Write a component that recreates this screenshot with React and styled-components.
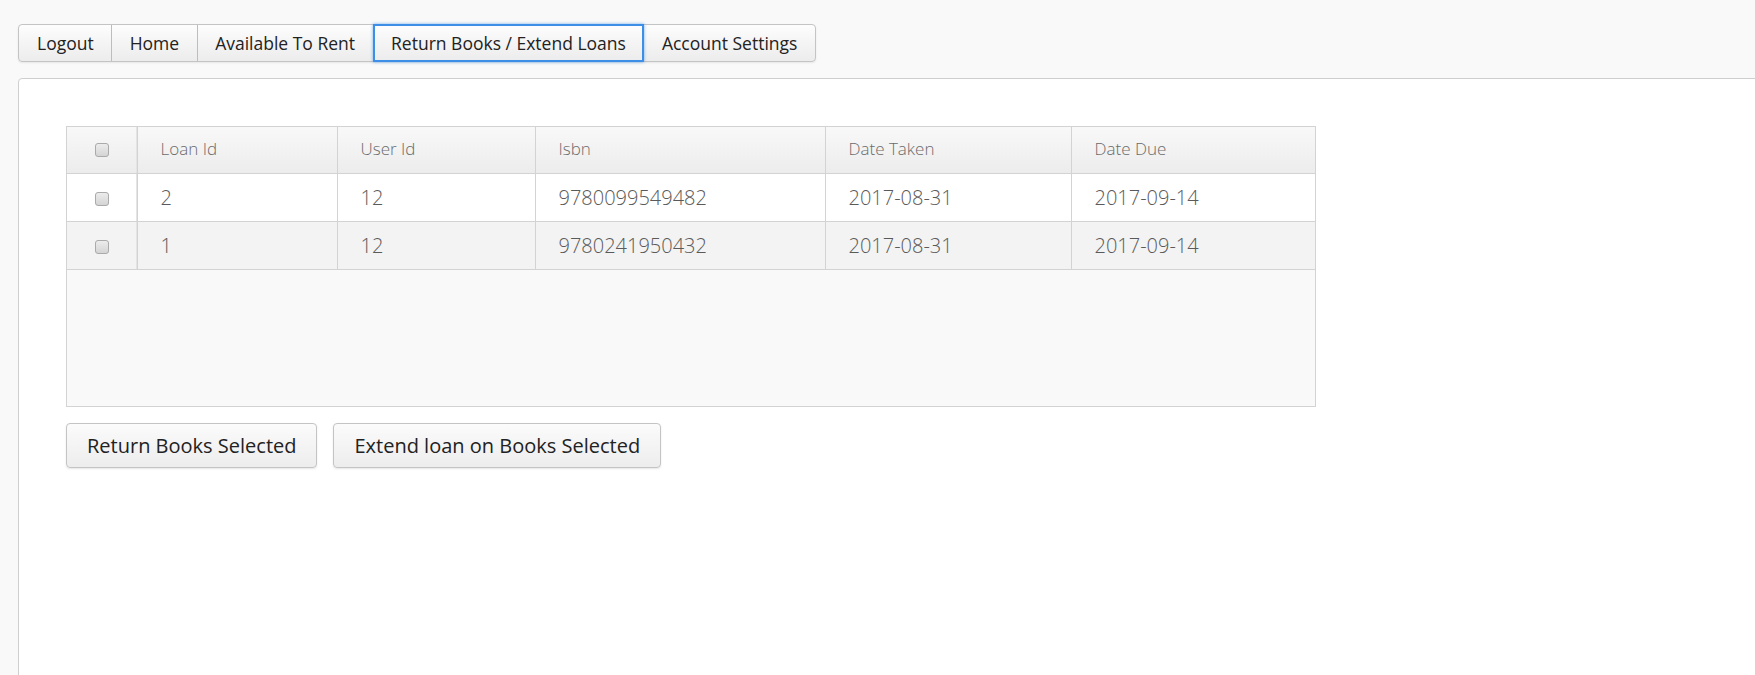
import React from "react";
import styled, { createGlobalStyle, css } from "styled-components";

const Global = createGlobalStyle`
  html, body {
    margin: 0;
    padding: 0;
    background: #f9f9f9;
    overflow: hidden;
    font-family: "Open Sans", "Noto Sans", sans-serif;
  }
`;

const Page = styled.div`
  padding: 24px 0 0 18px;
  min-height: 675px;
  box-sizing: border-box;
`;

const TabBar = styled.nav`
  display: inline-flex;
  align-items: stretch;
  height: 38px;
  border: 1px solid #c4c4c4;
  border-radius: 4px;
  box-sizing: border-box;
  background: linear-gradient(#fdfdfd, #ececec);
  box-shadow: 0 1px 2px rgba(0, 0, 0, 0.08);
`;

const Tab = styled.button`
  font-family: inherit;
  font-size: 17.5px;
  color: #222;
  background: transparent;
  border: 0 solid #bdbdbd;
  border-left-width: 1px;
  padding: 0 17.5px;
  margin: 0;
  cursor: pointer;
  &:first-child {
    border-left-width: 0;
    padding-left: 18px;
  }
  ${(p) =>
    p.$active &&
    css`
      border: 2px solid #3d8ee6;
      box-shadow: 0 0 3px rgba(61, 142, 230, 0.7);
      margin: -1px 0;
      padding: 0 16.5px;
    `}
  ${(p) =>
    p.$afterActive &&
    css`
      border-left-width: 0;
    `}
`;

const Panel = styled.section`
  margin-top: 16px;
  margin-right: -20px;
  min-height: 700px;
  background: #fff;
  border: 1px solid #cfcfcf;
  border-radius: 4px 0 0 0;
  padding: 47px;
`;

const TableBox = styled.div`
  width: 1250px;
  height: 281px;
  border: 1px solid #d3d3d3;
  background: #f9f9f9;
  box-sizing: border-box;
`;

const Table = styled.table`
  width: 100%;
  border-collapse: collapse;
  table-layout: fixed;
`;

const Th = styled.th`
  height: 43px;
  padding: 0 0 3px 23px;
  text-align: left;
  font-weight: 300;
  font-size: 17px;
  color: #6b6b6b;
  background: linear-gradient(#f8f8f8, #ececec);
  border-left: 1px solid #d3d3d3;
  border-bottom: 1px solid #d3d3d3;
`;

const Tr = styled.tr`
  background: ${(p) => (p.$alt ? "#f3f3f3" : "#fff")};
`;

const Td = styled.td`
  height: 46px;
  padding: 0 0 1px 23px;
  font-weight: 300;
  font-size: 20px;
  color: #5a5a5a;
  border-left: 1px solid #d3d3d3;
  border-bottom: 1px solid #d3d3d3;
`;

const CheckCol = styled.col`
  width: 70px;
`;

const CheckCell = styled.td`
  height: 46px;
  padding: 0 0 1px 0;
  text-align: center;
  border-right: 1px solid #d3d3d3;
  box-shadow: inset -1px 0 0 #e4e4e4;
  border-bottom: 1px solid #d3d3d3;
`;

const CheckHead = styled.th`
  height: 43px;
  padding: 0 0 3px 0;
  text-align: center;
  background: linear-gradient(#f8f8f8, #ececec);
  border-right: 1px solid #d3d3d3;
  box-shadow: inset -1px 0 0 #e4e4e4;
  border-bottom: 1px solid #d3d3d3;
`;

const Box = styled.span`
  display: inline-block;
  width: 12px;
  height: 12px;
  border: 1px solid #aaaaaa;
  border-radius: 3px;
  background: linear-gradient(#ececec, #d4d4d4);
  vertical-align: middle;
`;

const Actions = styled.div`
  display: flex;
  gap: 16px;
  margin-top: 16px;
`;

const ActionButton = styled.button`
  height: 45px;
  padding: 0 20px;
  font-family: inherit;
  font-size: 20px;
  color: #222;
  background: linear-gradient(#fbfbfb, #ededed);
  border: 1px solid #c4c4c4;
  border-radius: 4px;
  box-shadow: 0 1px 2px rgba(0, 0, 0, 0.1);
  cursor: pointer;
`;

const tabs = [
  "Logout",
  "Home",
  "Available To Rent",
  "Return Books / Extend Loans",
  "Account Settings",
];
const activeIdx = 3;

const cols = [200, 198, 290, 246];
const headers = ["Loan Id", "User Id", "Isbn", "Date Taken", "Date Due"];
const rows = [
  ["2", "12", "9780099549482", "2017-08-31", "2017-09-14"],
  ["1", "12", "9780241950432", "2017-08-31", "2017-09-14"],
];

export default function App() {
  return (
    <>
      <Global />
      <Page>
        <TabBar>
          {tabs.map((t, i) => (
            <Tab key={t} $active={i === activeIdx} $afterActive={i === activeIdx + 1}>
              {t}
            </Tab>
          ))}
        </TabBar>
        <Panel>
          <TableBox>
            <Table>
              <colgroup>
                <CheckCol />
                {cols.map((w, i) => (
                  <col key={i} style={{ width: w }} />
                ))}
                <col />
              </colgroup>
              <thead>
                <tr>
                  <CheckHead>
                    <Box />
                  </CheckHead>
                  {headers.map((h) => (
                    <Th key={h}>{h}</Th>
                  ))}
                </tr>
              </thead>
              <tbody>
                {rows.map((r, i) => (
                  <Tr key={i} $alt={i % 2 === 1}>
                    <CheckCell>
                      <Box />
                    </CheckCell>
                    {r.map((c, j) => (
                      <Td key={j}>{c}</Td>
                    ))}
                  </Tr>
                ))}
              </tbody>
            </Table>
          </TableBox>
          <Actions>
            <ActionButton>Return Books Selected</ActionButton>
            <ActionButton>Extend loan on Books Selected</ActionButton>
          </Actions>
        </Panel>
      </Page>
    </>
  );
}
